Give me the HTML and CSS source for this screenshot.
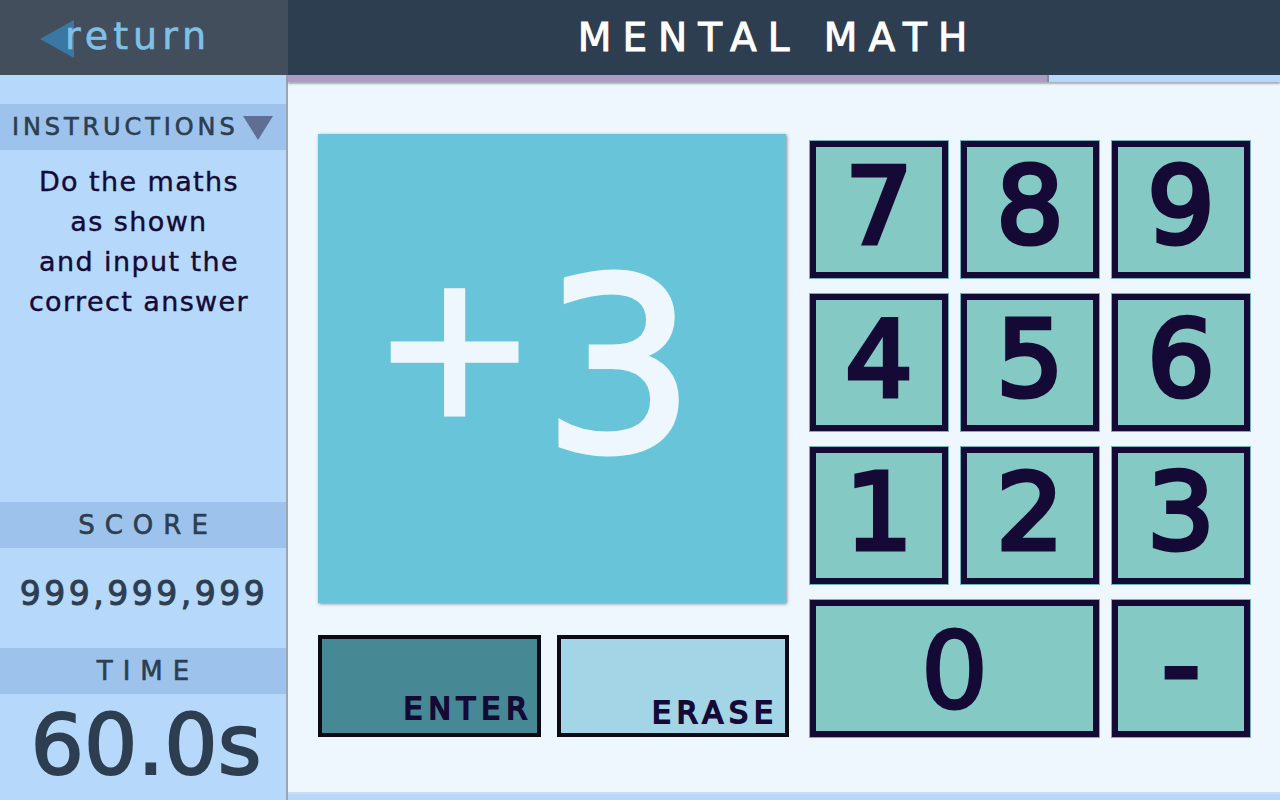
FILE: index.html
```html
<!DOCTYPE html>
<html>
<head>
<meta charset="utf-8">
<title>Mental Math</title>
<link rel="stylesheet" href="styles.css">
</head>
<body>
<div class="app">
  <div class="back">
    <svg class="back-arrow" width="36" height="40" viewBox="0 0 36 40"><polygon points="0,20 34,1 34,39" fill="#3b7cab" fill-opacity="0.9"/></svg>
    <span class="back-text">return</span>
  </div>
  <header class="title">MENTAL MATH</header>
  <aside class="sidebar">
    <div class="band band-instr"><span>INSTRUCTIONS</span><svg width="30" height="26" viewBox="0 0 30 26"><polygon points="0,1 30,1 15,25" fill="#5f6f94"/></svg></div>
    <div class="instr-text">Do the maths<br>as shown<br>and input the<br>correct answer</div>
    <div class="band band-label">SCORE</div>
    <div class="score">999,999,999</div>
    <div class="band band-label">TIME</div>
    <div class="time">60.0s</div>
  </aside>
  <main class="main">
    <div class="progress"><div class="progress-fill"></div></div>
    <div class="content">
      <div class="left">
        <div class="card"><span class="card-op">+</span><span class="card-num">3</span></div>
        <div class="actions">
          <div class="btn btn-enter">ENTER</div>
          <div class="btn btn-erase">ERASE</div>
        </div>
      </div>
      <div class="keypad">
        <div class="key">7</div>
        <div class="key">8</div>
        <div class="key">9</div>
        <div class="key">4</div>
        <div class="key">5</div>
        <div class="key">6</div>
        <div class="key">1</div>
        <div class="key">2</div>
        <div class="key">3</div>
        <div class="key key-wide">0</div>
        <div class="key">-</div>
      </div>
    </div>
    <div class="bottom"></div>
  </main>
</div>
</body>
</html>
```

FILE: styles.css
```css
* { box-sizing: border-box; }
html, body { margin: 0; padding: 0; }
body {
  width: 1280px;
  height: 800px;
  overflow: hidden;
  font-family: "DejaVu Sans", "Noto Sans", sans-serif;
  background: #eef6fe;
}
.app {
  display: grid;
  grid-template-columns: 288px 1fr;
  grid-template-rows: 75px 725px;
  width: 1280px;
  height: 800px;
}
.back {
  background: #424e5c;
  display: flex;
  align-items: center;
  padding-left: 40px;
}
.back-arrow { display: block; margin-top: 2px; }
.back-text {
  color: #7fc0e8;
  font-size: 38px;
  letter-spacing: 5px;
  margin-left: -11px;
  margin-top: -4px;
  -webkit-text-stroke: 0.6px #7fc0e8;
}
.title {
  background: #2d3e50;
  color: #ffffff;
  display: flex;
  align-items: center;
  justify-content: center;
  font-size: 39px;
  letter-spacing: 11px;
  padding-right: 12px;
  -webkit-text-stroke: 1px #ffffff;
}
.sidebar {
  background: #b5d8fb;
  border-right: 2px solid #9aa6b2;
  display: flex;
  flex-direction: column;
  padding-top: 29px;
  color: #2d3e50;
}
.band {
  height: 46px;
  background: #9dc3ec;
  display: flex;
  align-items: center;
  flex-shrink: 0;
}
.band-instr {
  padding-left: 12px;
  font-size: 24px;
  letter-spacing: 3.9px;
  gap: 4px;
  -webkit-text-stroke: 0.6px #2d3e50;
}
.band-instr svg { margin-top: 2px; }
.band-label {
  justify-content: center;
  font-size: 26px;
  letter-spacing: 10px;
  padding-left: 10px;
  -webkit-text-stroke: 0.6px #2d3e50;
}
.instr-text {
  height: 352px;
  padding-top: 12px;
  text-align: center;
  font-size: 27px;
  line-height: 40px;
  letter-spacing: 1.4px;
  color: #150a35;
  padding-right: 8px;
  -webkit-text-stroke: 0.4px #150a35;
}
.score {
  height: 100px;
  display: flex;
  align-items: center;
  justify-content: center;
  font-size: 33px;
  letter-spacing: 3.5px;
  padding-bottom: 10px;
  padding-left: 2px;
  -webkit-text-stroke: 1px #2d3e50;
}
.time {
  flex: 1;
  display: flex;
  align-items: center;
  justify-content: center;
  font-size: 84px;
  padding-bottom: 4px;
  padding-left: 6px;
  -webkit-text-stroke: 2px #2d3e50;
}
.main {
  display: flex;
  flex-direction: column;
  background: #eef6fe;
}
.progress {
  height: 7px;
  background: #b5d8fb;
  box-shadow: 0 2px 2px rgba(80, 90, 100, 0.45);
  flex-shrink: 0;
  position: relative;
  z-index: 1;
}
.progress-fill {
  width: 761px;
  height: 100%;
  background: #ad9bc5;
  border-right: 2px solid #7f8ea0;
}
.content {
  flex: 1;
  display: flex;
  padding: 52px 0 0 30px;
}
.left {
  width: 471px;
  display: flex;
  flex-direction: column;
  gap: 32px;
}
.card {
  width: 468px;
  height: 469px;
  background: #67c4d9;
  box-shadow: 1px 1px 3px rgba(60, 70, 80, 0.6);
  color: #eef6fe;
  display: flex;
  align-items: center;
  justify-content: center;
  gap: 6px;
  padding-right: 36px;
  -webkit-text-stroke: 5px #eef6fe;
}
.card-op {
  font-size: 196px;
  line-height: 1;
  margin-top: -46px;
}
.card-num {
  font-size: 240px;
  line-height: 1;
  margin-top: -2px;
}
.actions {
  display: flex;
  gap: 16px;
}
.btn {
  height: 102px;
  border: 4px solid #0b0b16;
  display: flex;
  align-items: flex-end;
  justify-content: flex-end;
  color: #150a35;
  font-size: 30px;
  letter-spacing: 6px;
  -webkit-text-stroke: 2px #150a35;
}
.btn-enter {
  width: 223px;
  background: #478895;
  padding: 0 4px 7px 0;
}
.btn-erase {
  width: 232px;
  background: #a3d5e6;
  padding: 0 6px 3px 0;
}
.keypad {
  margin-left: 21px;
  margin-top: 7px;
  display: grid;
  grid-template-columns: repeat(3, 138px);
  grid-auto-rows: 137px;
  column-gap: 13px;
  row-gap: 16px;
  align-content: start;
}
.key {
  background: #85c9c4;
  border: 6px solid #150a35;
  outline: 1px solid #6fb3b8;
  color: #150a35;
  font-size: 106px;
  display: flex;
  align-items: center;
  justify-content: center;
  padding-bottom: 6px;
  -webkit-text-stroke: 5px #150a35;
}
.key-wide {
  grid-column: span 2;
  -webkit-text-stroke: 3px #150a35;
  padding-bottom: 0;
  padding-top: 6px;
}
.bottom {
  height: 8px;
  background: #b5d8fb;
  border-top: 2px solid #d4dde6;
  flex-shrink: 0;
}
```
